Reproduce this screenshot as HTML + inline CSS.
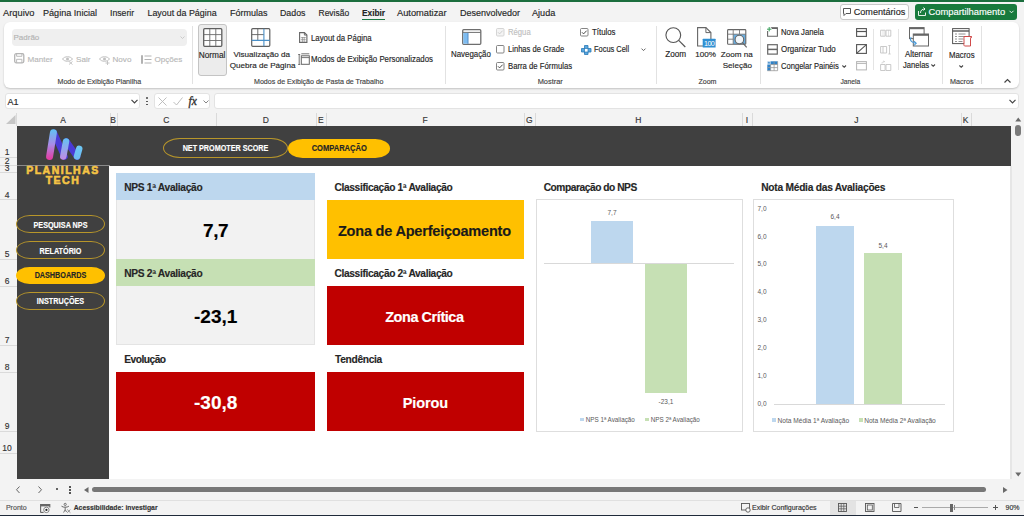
<!DOCTYPE html>
<html><head><meta charset="utf-8">
<style>
*{box-sizing:border-box;margin:0;padding:0}
html,body{width:1024px;height:516px;overflow:hidden}
body{position:relative;background:#f3f3f3;font-family:"Liberation Sans",sans-serif;color:#262626}
.a{position:absolute}
.t{position:absolute;white-space:nowrap;line-height:12px;height:12px;-webkit-text-stroke:0.15px currentColor}
.sep{position:absolute;width:1px;background:#e2e2e2}
svg{position:absolute;overflow:visible}
</style></head><body>
<!-- top green line -->
<div class="a" style="left:0;top:0;width:1024px;height:2px;background:#1b6e3e"></div>

<!-- MENU TABS -->
<div class="t" style="left:3px;top:6.5px;font-size:9.3px">Arquivo</div>
<div class="t" style="left:43px;top:6.5px;font-size:9.1px">Página Inicial</div>
<div class="t" style="left:110px;top:6.5px;font-size:8.7px">Inserir</div>
<div class="t" style="left:147.5px;top:6.5px;font-size:8.9px">Layout da Página</div>
<div class="t" style="left:230px;top:6.5px;font-size:9px">Fórmulas</div>
<div class="t" style="left:280px;top:6.5px;font-size:8.8px">Dados</div>
<div class="t" style="left:318.5px;top:6.5px;font-size:8.5px">Revisão</div>
<div class="t" style="left:362px;top:6.5px;font-size:8.3px;font-weight:bold">Exibir</div>
<div class="a" style="left:362px;top:18.8px;width:23px;height:1.4px;background:#1b7a43"></div>
<div class="t" style="left:397px;top:6.5px;font-size:9.3px">Automatizar</div>
<div class="t" style="left:460px;top:6.5px;font-size:9px">Desenvolvedor</div>
<div class="t" style="left:532px;top:6.5px;font-size:9.1px">Ajuda</div>

<!-- Comentarios / Compartilhamento -->
<div class="a" style="left:840px;top:4px;width:69px;height:15.5px;background:#fff;border:1px solid #c8c8c8;border-radius:3px"></div>
<svg style="left:843px;top:7.5px" width="8" height="8" viewBox="0 0 8 8"><path d="M0.5 0.5h7v5h-4.5l-2 2v-2h-0.5z" fill="none" stroke="#444" stroke-width="0.9"/></svg>
<div class="t" style="left:853.7px;top:5.7px;font-size:9.1px">Comentários</div>
<div class="a" style="left:915px;top:4px;width:101.5px;height:15.5px;background:#187a3d;border-radius:3px"></div>
<svg style="left:918px;top:6.5px" width="8" height="9" viewBox="0 0 8 9"><path d="M0.5 4v4.5h7v-3" fill="none" stroke="#fff" stroke-width="0.9"/><path d="M2.5 6c0-3 2-4 4.5-4M5.5 0.5l1.5 1.5l-1.5 1.5" fill="none" stroke="#fff" stroke-width="0.9"/></svg>
<div class="t" style="left:928.5px;top:5.7px;font-size:9.4px;color:#fff">Compartilhamento</div>
<svg style="left:1009px;top:9.5px" width="5" height="4" viewBox="0 0 5 4"><path d="M0.5 0.8l2 2l2-2" fill="none" stroke="#fff" stroke-width="0.9"/></svg>

<!-- RIBBON PANEL -->
<div class="a" style="left:4px;top:22px;width:1015px;height:66px;background:#fff;border-radius:6px;box-shadow:0 1px 2px rgba(0,0,0,0.2)"></div>

<!-- RIBBON CONTENT -->
<!-- group 1: Modo de Exibicao Planilha -->
<div class="a" style="left:11.5px;top:29px;width:175.5px;height:17px;background:#efefef;border-radius:4px"></div>
<div class="t" style="left:13.5px;top:31.5px;font-size:8px;color:#b4b4b4">Padrão</div>
<svg style="left:180px;top:36px" width="5" height="3" viewBox="0 0 5 3"><path d="M0.5 0.5l2 2l2-2" fill="none" stroke="#c0c0c0" stroke-width="0.8"/></svg>
<svg style="left:14.2px;top:53.2px" width="10.5" height="10.5" viewBox="0 0 10.5 10.5"><rect x="0.7" y="0.7" width="9.1" height="9.1" rx="1.5" fill="none" stroke="#b4b4b4" stroke-width="1.3"/><path d="M2.6 0.7v2.6h5.3v-2.6" fill="none" stroke="#b4b4b4" stroke-width="0.9"/><path d="M2.6 9.8v-3.5h5.3v3.5" fill="none" stroke="#b4b4b4" stroke-width="0.9"/></svg>
<div class="t" style="left:27.5px;top:54px;font-size:8.1px;color:#b8b8b8">Manter</div>
<svg style="left:62px;top:55px" width="12" height="10" viewBox="0 0 12 10"><path d="M0.5 4c2-3 8-3 10 0c-2 3-8 3-10 0z" fill="none" stroke="#c0c0c0" stroke-width="1"/><circle cx="5.5" cy="4" r="1.5" fill="#c0c0c0"/><path d="M7 6.5l3.5 3M10.5 6.5l-3.5 3" stroke="#c0c0c0" stroke-width="0.9"/></svg>
<div class="t" style="left:76px;top:54px;font-size:8.1px;color:#b8b8b8">Sair</div>
<svg style="left:99px;top:55px" width="12" height="10" viewBox="0 0 12 10"><path d="M0.5 4c2-3 8-3 10 0c-2 3-8 3-10 0z" fill="none" stroke="#c0c0c0" stroke-width="1"/><circle cx="5.5" cy="4" r="1.5" fill="#c0c0c0"/><path d="M8.5 6v4M6.5 8h4" stroke="#c0c0c0" stroke-width="0.9"/></svg>
<div class="t" style="left:112.5px;top:54px;font-size:8.1px;color:#b8b8b8">Novo</div>
<svg style="left:141px;top:54.5px" width="11" height="9" viewBox="0 0 11 9"><path d="M1 0.3v8.4" stroke="#aaa" stroke-width="1.8"/><path d="M3.5 1h7M3.5 4.5h7M3.5 8h7" stroke="#b4b4b4" stroke-width="1"/></svg>
<div class="t" style="left:154.5px;top:54px;font-size:8.1px;color:#b8b8b8">Opções</div>
<div class="t" style="left:57.5px;top:75.5px;font-size:7.1px;color:#444">Modo de Exibição Planilha</div>
<div class="sep" style="left:192px;top:25.5px;height:58px"></div>

<!-- group 2 -->
<div class="a" style="left:197.5px;top:24px;width:29.5px;height:51.5px;background:#ececec;border:1px solid #c4c4c4;border-radius:3px"></div>
<svg style="left:202.5px;top:27.5px" width="19.5" height="19" viewBox="0 0 19.5 19"><rect x="0.7" y="0.7" width="18.1" height="17.6" rx="1" fill="#fff" stroke="#5e5e5e" stroke-width="1.3"/><path d="M6.8 0.7v17.6M12.8 0.7v17.6M0.7 6.6h18.1M0.7 12.5h18.1" stroke="#6a6a6a" stroke-width="0.9"/></svg>
<div class="t" style="left:198.7px;top:48.5px;font-size:8.3px">Normal</div>
<svg style="left:251px;top:27.5px" width="19.5" height="19" viewBox="0 0 19.5 19"><rect x="0.7" y="0.7" width="18.1" height="17.6" rx="1" fill="#fff" stroke="#606060" stroke-width="1.2"/><path d="M6.8 0.7v11.8M0.7 6.6h12.2" stroke="#606060" stroke-width="0.9"/><path d="M12.9 0.7v17.6M0.7 12.4h18.1" stroke="#4a90c8" stroke-width="1.1"/></svg>
<div class="t" style="left:233.5px;top:49.1px;font-size:8.1px">Visualização da</div>
<div class="t" style="left:229.7px;top:59.6px;font-size:8.1px">Quebra de Página</div>
<svg style="left:298.8px;top:31.8px" width="8.5" height="11" viewBox="0 0 8.5 11"><path d="M0.6 0.6h4.8l2.5 2.5v7.3h-7.3z" fill="#fff" stroke="#666" stroke-width="1.1"/><path d="M5.4 0.6v2.5h2.5" fill="none" stroke="#666" stroke-width="0.9"/><path d="M1.8 5.6h5M1.8 7.7h5M3.4 5v5.2M5.2 5v5.2" stroke="#888" stroke-width="0.7"/></svg>
<div class="t" style="left:311px;top:33.3px;font-size:8.2px;transform:scaleX(0.951);transform-origin:0 50%">Layout da Página</div>
<svg style="left:297.5px;top:52.5px" width="12" height="12.5" viewBox="0 0 12 12.5"><path d="M1.2 1.5v10M0.2 1.5h2M0.2 11.5h2" stroke="#666" stroke-width="0.9"/><rect x="3.3" y="2.8" width="8" height="8.5" fill="#fff" stroke="#666" stroke-width="1"/><path d="M3.3 0.8h8M3.3 4.6h8" stroke="#666" stroke-width="0.9"/></svg>
<div class="t" style="left:311px;top:54.4px;font-size:8.2px;transform:scaleX(0.957);transform-origin:0 50%">Modos de Exibição Personalizados</div>
<div class="t" style="left:254px;top:75.5px;font-size:7.1px;color:#444">Modos de Exibição de Pasta de Trabalho</div>
<div class="sep" style="left:444.5px;top:25.5px;height:58px"></div>

<!-- group 3: Mostrar -->
<svg style="left:461.5px;top:28.8px" width="19.5" height="16" viewBox="0 0 19.5 16"><rect x="0.7" y="0.7" width="18.1" height="14.6" rx="1" fill="#fff" stroke="#6e6e6e" stroke-width="1.3"/><path d="M0.7 3.4h18.1" stroke="#6e6e6e" stroke-width="1"/><rect x="1.3" y="3.9" width="4.6" height="10.8" fill="#7ebcf0"/><path d="M6 3.9v11" stroke="#3f7fc0" stroke-width="0.9"/></svg>
<div class="t" style="left:451px;top:49.1px;font-size:8.2px;transform:scaleX(0.963);transform-origin:0 50%">Navegação</div>
<svg style="left:496.3px;top:28px" width="8.5" height="8.5" viewBox="0 0 8.5 8.5"><rect x="0.5" y="0.5" width="7.5" height="7.5" rx="1" fill="#f4f4f4" stroke="#d0d0d0" stroke-width="0.9"/><path d="M2 4.3l1.6 1.6l3-3.2" fill="none" stroke="#c8c8c8" stroke-width="0.9"/></svg>
<div class="t" style="left:507.9px;top:27.1px;font-size:8.2px;color:#c0c0c0;transform:scaleX(0.939);transform-origin:0 50%">Régua</div>
<svg style="left:496.3px;top:44.8px" width="8.5" height="8.5" viewBox="0 0 8.5 8.5"><rect x="0.5" y="0.5" width="7.5" height="7.5" rx="1" fill="#fff" stroke="#777" stroke-width="0.9"/></svg>
<div class="t" style="left:507.9px;top:44.1px;font-size:8.2px;transform:scaleX(0.927);transform-origin:0 50%">Linhas de Grade</div>
<svg style="left:496.3px;top:62px" width="8.5" height="8.5" viewBox="0 0 8.5 8.5"><rect x="0.5" y="0.5" width="7.5" height="7.5" rx="1" fill="#fff" stroke="#777" stroke-width="0.9"/><path d="M2 4.3l1.6 1.6l3-3.2" fill="none" stroke="#333" stroke-width="0.9"/></svg>
<div class="t" style="left:507.9px;top:61.1px;font-size:8.2px;transform:scaleX(0.945);transform-origin:0 50%">Barra de Fórmulas</div>
<div class="t" style="left:537.7px;top:75.7px;font-size:7.4px;color:#444">Mostrar</div>
<svg style="left:580px;top:27.8px" width="8.5" height="8.5" viewBox="0 0 8.5 8.5"><rect x="0.5" y="0.5" width="7.5" height="7.5" rx="1" fill="#fff" stroke="#777" stroke-width="0.9"/><path d="M2 4.3l1.6 1.6l3-3.2" fill="none" stroke="#333" stroke-width="0.9"/></svg>
<div class="t" style="left:591.9px;top:27.1px;font-size:8.2px;transform:scaleX(0.957);transform-origin:0 50%">Títulos</div>
<svg style="left:580.7px;top:44.5px" width="10.5" height="10" viewBox="0 0 10.5 10"><path d="M3.5 0.5h3.5v3h3v3.5h-3v2.5h-3.5v-2.5h-3v-3.5h3z" fill="#5aa7de" stroke="#2a7ab8" stroke-width="0.8"/><rect x="3.5" y="3.5" width="3.5" height="3.5" fill="#fff" stroke="#2a7ab8" stroke-width="0.7"/></svg>
<div class="t" style="left:593.6px;top:44.1px;font-size:8.2px;transform:scaleX(0.909);transform-origin:0 50%">Focus Cell</div>
<svg style="left:640.5px;top:48px" width="5" height="3.5" viewBox="0 0 5 3.5"><path d="M0.5 0.6l2 2l2-2" fill="none" stroke="#555" stroke-width="0.9"/></svg>
<div class="sep" style="left:656px;top:25.5px;height:58px"></div>

<!-- group 4: Zoom -->
<svg style="left:665px;top:26.5px" width="21" height="20.5" viewBox="0 0 21 20.5"><circle cx="8.3" cy="8.1" r="7.4" fill="none" stroke="#555" stroke-width="1.1"/><path d="M13.7 13.4l6.6 6.6" stroke="#555" stroke-width="1.2"/></svg>
<div class="t" style="left:665.2px;top:48.5px;font-size:8.2px">Zoom</div>
<svg style="left:696.5px;top:26.8px" width="19" height="21" viewBox="0 0 19 21"><path d="M0.6 0.6h8.3l5 5v13.4h-13.3z" fill="#fff" stroke="#666" stroke-width="1.1"/><path d="M8.9 0.6v5h5" fill="none" stroke="#666" stroke-width="1"/><rect x="5.7" y="11.8" width="12.9" height="8.8" rx="0.5" fill="#2f8fd2"/><text x="12.15" y="18.6" font-size="7.2" font-family="Liberation Sans" fill="#fff" text-anchor="middle" letter-spacing="-0.6">100</text></svg>
<div class="t" style="left:695.3px;top:49.1px;font-size:8.1px">100%</div>
<svg style="left:727px;top:28.8px" width="20" height="19" viewBox="0 0 20 19"><rect x="6.2" y="5.2" width="12.6" height="10" fill="#6aaee0"/><rect x="0.6" y="0.6" width="18.2" height="14.6" rx="0.8" fill="none" stroke="#666" stroke-width="1.1"/><path d="M0.6 5.2h18.2M0.6 10.2h5.6M6.2 0.6v14.6M12.5 0.6v4.6" stroke="#777" stroke-width="0.9"/><circle cx="12.4" cy="10.6" r="4.3" fill="#f2f7fb" stroke="#666" stroke-width="1.1"/><path d="M15.5 13.7l4.2 4.6" stroke="#666" stroke-width="1.2"/></svg>
<div class="t" style="left:720.7px;top:49.1px;font-size:8.1px">Zoom na</div>
<div class="t" style="left:722.7px;top:59.6px;font-size:8.1px">Seleção</div>
<div class="t" style="left:698.4px;top:75.5px;font-size:7.1px;color:#444">Zoom</div>
<div class="sep" style="left:759.5px;top:25.5px;height:58px"></div>

<!-- group 5: Janela -->
<svg style="left:767.2px;top:27.2px" width="11.5" height="10" viewBox="0 0 11.5 10"><path d="M3.8 0.7h6.6v8.6h-9.8v-5.3" fill="none" stroke="#666" stroke-width="1.1"/><path d="M5 1.3h5.4" stroke="#666" stroke-width="1.4"/><path d="M2.2 0v4.4M0 2.2h4.4" stroke="#3aa05a" stroke-width="1"/></svg>
<div class="t" style="left:780.9px;top:27.3px;font-size:8.2px;transform:scaleX(0.939);transform-origin:0 50%">Nova Janela</div>
<svg style="left:767.2px;top:43.8px" width="11" height="11" viewBox="0 0 11 11"><rect x="0.7" y="0.7" width="9.6" height="9.4" fill="#fff" stroke="#666" stroke-width="1.2"/><path d="M0.7 5.4h9.6" stroke="#666" stroke-width="1.5"/></svg>
<div class="t" style="left:780.9px;top:44.3px;font-size:8.2px;transform:scaleX(0.970);transform-origin:0 50%">Organizar Tudo</div>
<svg style="left:767.2px;top:61.2px" width="11" height="10" viewBox="0 0 11 10"><rect x="3.6" y="0.3" width="7" height="3.2" fill="#2f82c8"/><rect x="0.3" y="3.5" width="3.3" height="6.2" fill="#2f82c8"/><path d="M3.6 3.5h7M3.6 6.6h7M0.3 6.6h3.3M7.1 0.3v9.4M3.6 3.5v6.2M10.6 0.3v9.4M0.3 9.7h10.3" stroke="#999" stroke-width="0.8"/><path d="M1.9 0.2v3M0.4 1.7h3M0.8 0.6l2.2 2.2M3 0.6l-2.2 2.2" stroke="#3a86c8" stroke-width="0.6"/></svg>
<div class="t" style="left:780.9px;top:61.1px;font-size:8.2px;transform:scaleX(0.927);transform-origin:0 50%">Congelar Painéis</div>
<svg style="left:841.5px;top:65px" width="4.5" height="3" viewBox="0 0 4.5 3"><path d="M0.4 0.5l1.8 1.8l1.8-1.8" fill="none" stroke="#444" stroke-width="1.1"/></svg>
<svg style="left:856.2px;top:28px" width="11" height="9" viewBox="0 0 11 9"><rect x="0.6" y="0.6" width="9.8" height="7.8" fill="#fff" stroke="#555" stroke-width="1.1"/><path d="M0.6 3.5h9.8" stroke="#555" stroke-width="1.2"/></svg>
<svg style="left:856.2px;top:44px" width="11" height="10" viewBox="0 0 11 10"><rect x="0.6" y="0.6" width="9.8" height="8.8" fill="#fff" stroke="#555" stroke-width="1.1"/><path d="M0.6 9.4l9.8-8.8" stroke="#555" stroke-width="1.1"/></svg>
<svg style="left:856.2px;top:61px" width="11" height="9.5" viewBox="0 0 11 9.5"><rect x="0.6" y="0.6" width="9.8" height="8.3" fill="#fff" stroke="#b5b5b5" stroke-width="1"/><path d="M0.6 2.4h9.8" stroke="#b5b5b5" stroke-width="1"/></svg>
<div class="sep" style="left:873.2px;top:29px;height:41px;background:#e4e4e4"></div>
<svg style="left:880px;top:28.5px" width="11.5" height="8" viewBox="0 0 11.5 8"><path d="M0.6 1.2h4.5v6h-4.5zM6 1.2h4.8v6h-4.8z" fill="none" stroke="#c4c4c4" stroke-width="0.9"/><path d="M3 1.2v6M8.5 1.2v6" stroke="#c4c4c4" stroke-width="0.5"/></svg>
<svg style="left:880px;top:44.5px" width="11.5" height="9.5" viewBox="0 0 11.5 9.5"><path d="M0.6 1.5h6v6.5h-6zM3 1.5v6.5" fill="none" stroke="#c4c4c4" stroke-width="0.9"/><path d="M9.5 0.5v8.5M8.3 0.5h2.4M8.3 9h2.4" stroke="#c4c4c4" stroke-width="0.8"/></svg>
<svg style="left:880px;top:60.5px" width="11.5" height="10" viewBox="0 0 11.5 10"><path d="M0.6 3.5h4.5v6h-4.5zM6 3.5h4.8v6h-4.8z" fill="none" stroke="#c4c4c4" stroke-width="0.9"/><path d="M2 2.5c0-1.5 1-2 2.5-2M3.5 -0.2l1 0.8l-1 0.8" fill="none" stroke="#c4c4c4" stroke-width="0.7"/></svg>
<div class="sep" style="left:897.5px;top:29px;height:41px;background:#e4e4e4"></div>
<svg style="left:908.3px;top:27.2px" width="21.5" height="20" viewBox="0 0 21.5 20"><rect x="1.5" y="0.6" width="14.6" height="11" fill="#fff" stroke="#666" stroke-width="1"/><path d="M1.5 1.4h14.6" stroke="#666" stroke-width="1.6"/><rect x="5.3" y="7" width="15.2" height="12" fill="#fff" stroke="#666" stroke-width="1"/><path d="M5.3 7.9h15.2" stroke="#666" stroke-width="1.8"/><path d="M3.2 10c-1.6 2.2-1.2 5.2 4.6 6.3" fill="none" stroke="#4a9ad8" stroke-width="1.1"/><path d="M6 14.2l2.2 2.1l-2.2 2" fill="none" stroke="#4a9ad8" stroke-width="1.1"/></svg>
<div class="t" style="left:904.7px;top:49.1px;font-size:8.2px;transform:scaleX(0.963);transform-origin:0 50%">Alternar</div>
<div class="t" style="left:902.5px;top:59.6px;font-size:8.2px;transform:scaleX(0.927);transform-origin:0 50%">Janelas</div>
<svg style="left:930.5px;top:63.5px" width="4.5" height="3" viewBox="0 0 4.5 3"><path d="M0.4 0.5l1.8 1.8l1.8-1.8" fill="none" stroke="#444" stroke-width="1.1"/></svg>
<div class="t" style="left:840.5px;top:75.5px;font-size:6.7px;color:#444">Janela</div>
<div class="sep" style="left:942px;top:25.5px;height:58px"></div>

<!-- group 6: Macros -->
<svg style="left:951.8px;top:28px" width="21" height="19.5" viewBox="0 0 21 19.5"><rect x="0.6" y="0.6" width="16.5" height="15" fill="#fff" stroke="#555" stroke-width="1"/><path d="M0.6 3h16.5" stroke="#555" stroke-width="1.4"/><path d="M3 6h2M6.5 6h7M3 8.5h2M6.5 8.5h7M3 11h2M6.5 11h5M3 13.5h2M6.5 13.5h4" stroke="#777" stroke-width="0.8"/><path d="M12 8.5h7.5l-1 2v7.5h-5.5c-1 0-1.5-1-1-2v-5.5z" fill="#fff" stroke="#d04a4a" stroke-width="1"/><path d="M19.5 8.5c0 1-0.5 2-1 2" fill="none" stroke="#d04a4a" stroke-width="0.9"/></svg>
<div class="t" style="left:948.7px;top:50.1px;font-size:8.2px;transform:scaleX(0.951);transform-origin:0 50%">Macros</div>
<svg style="left:959px;top:64.5px" width="4.5" height="3" viewBox="0 0 4.5 3"><path d="M0.4 0.5l1.8 1.8l1.8-1.8" fill="none" stroke="#444" stroke-width="1.1"/></svg>
<div class="t" style="left:950px;top:75.5px;font-size:7.2px;color:#444">Macros</div>
<div class="sep" style="left:981px;top:25.5px;height:58px"></div>
<svg style="left:1003.5px;top:79px" width="7" height="4" viewBox="0 0 7 4"><path d="M0.5 3.5l3-3l3 3" fill="none" stroke="#444" stroke-width="1.2"/></svg>

<!-- FORMULA BAR -->
<div class="a" style="left:4.5px;top:92.9px;width:135px;height:16px;background:#fff;border:1px solid #e3e3e3;border-radius:3px"></div>
<div class="t" style="left:7.5px;top:95.5px;font-size:9px">A1</div>
<svg style="left:131px;top:99px" width="7" height="5" viewBox="0 0 7 5"><path d="M0.5 0.8l3 3l3-3" fill="none" stroke="#444" stroke-width="1.2"/></svg>
<div class="a" style="left:146px;top:97.4px;width:1.5px;height:1.5px;background:#444;border-radius:1px"></div>
<div class="a" style="left:146px;top:100.5px;width:1.5px;height:1.5px;background:#444;border-radius:1px"></div>
<div class="a" style="left:146px;top:103.6px;width:1.5px;height:1.5px;background:#444;border-radius:1px"></div>
<div class="a" style="left:154px;top:92.9px;width:56px;height:16px;background:#fff;border:1px solid #e3e3e3;border-radius:3px"></div>
<svg style="left:158px;top:97px" width="9" height="9" viewBox="0 0 9 9"><path d="M0.5 0.5l8 8M8.5 0.5l-8 8" stroke="#b8b8b8" stroke-width="0.9"/></svg>
<svg style="left:173px;top:97px" width="10" height="9" viewBox="0 0 10 9"><path d="M0.5 5l3 3l6-7.5" fill="none" stroke="#b8b8b8" stroke-width="0.9"/></svg>
<div class="t" style="left:188.5px;top:94.8px;font-size:11.5px;font-family:'Liberation Serif';font-style:italic;color:#333;-webkit-text-stroke:0.35px #333">fx</div>
<svg style="left:202.8px;top:99.5px" width="6" height="4" viewBox="0 0 6 4"><path d="M0.5 0.5l2.5 2.5l2.5-2.5" fill="none" stroke="#777" stroke-width="0.9"/></svg>
<div class="a" style="left:213.5px;top:92.9px;width:805px;height:16px;background:#fff;border:1px solid #e3e3e3;border-radius:3px"></div>
<svg style="left:1009px;top:99px" width="7" height="5" viewBox="0 0 7 5"><path d="M0.5 0.8l3 3l3-3" fill="none" stroke="#444" stroke-width="1.2"/></svg>

<!-- COLUMN HEADERS -->
<div class="a" style="left:0;top:113px;width:1011px;height:13px;background:#f3f3f3"></div>

<!-- COLUMN HEADER LABELS -->
<svg style="left:5.9px;top:115.3px" width="9.5" height="9" viewBox="0 0 9.5 9"><path d="M9.5 0v9h-9.5z" fill="#c6c6c6"/></svg>
<div class="a" style="left:16px;top:113px;width:1px;height:13px;background:#dadada"></div>
<div class="a" style="left:109.5px;top:113px;width:1px;height:13px;background:#dadada"></div>
<div class="a" style="left:116.5px;top:113px;width:1px;height:13px;background:#dadada"></div>
<div class="a" style="left:216px;top:113px;width:1px;height:13px;background:#dadada"></div>
<div class="a" style="left:315.5px;top:113px;width:1px;height:13px;background:#dadada"></div>
<div class="a" style="left:326px;top:113px;width:1px;height:13px;background:#dadada"></div>
<div class="a" style="left:524px;top:113px;width:1px;height:13px;background:#dadada"></div>
<div class="a" style="left:534.5px;top:113px;width:1px;height:13px;background:#dadada"></div>
<div class="a" style="left:742px;top:113px;width:1px;height:13px;background:#dadada"></div>
<div class="a" style="left:752px;top:113px;width:1px;height:13px;background:#dadada"></div>
<div class="a" style="left:960.5px;top:113px;width:1px;height:13px;background:#dadada"></div>
<div class="a" style="left:970.5px;top:113px;width:1px;height:13px;background:#dadada"></div>
<div class="t" style="left:16.5px;width:93px;top:114px;font-size:8.5px;text-align:center;color:#333">A</div>
<div class="t" style="left:109.5px;width:7px;top:114px;font-size:8.5px;text-align:center;color:#333">B</div>
<div class="t" style="left:116.5px;width:99.5px;top:114px;font-size:8.5px;text-align:center;color:#333">C</div>
<div class="t" style="left:216px;width:99.5px;top:114px;font-size:8.5px;text-align:center;color:#333">D</div>
<div class="t" style="left:315.5px;width:10.5px;top:114px;font-size:8.5px;text-align:center;color:#333">E</div>
<div class="t" style="left:326px;width:198px;top:114px;font-size:8.5px;text-align:center;color:#333">F</div>
<div class="t" style="left:524px;width:10.5px;top:114px;font-size:8.5px;text-align:center;color:#333">G</div>
<div class="t" style="left:534.5px;width:207.5px;top:114px;font-size:8.5px;text-align:center;color:#333">H</div>
<div class="t" style="left:742px;width:10px;top:114px;font-size:8.5px;text-align:center;color:#333">I</div>
<div class="t" style="left:752px;width:208.5px;top:114px;font-size:8.5px;text-align:center;color:#333">J</div>
<div class="t" style="left:960.5px;width:10px;top:114px;font-size:8.5px;text-align:center;color:#333">K</div>

<!-- ROW HEADERS -->
<div class="a" style="left:0;top:156.5px;width:16.5px;height:1px;background:#dadada"></div>
<div class="a" style="left:0;top:164.5px;width:16.5px;height:1px;background:#dadada"></div>
<div class="a" style="left:0;top:171.5px;width:16.5px;height:1px;background:#dadada"></div>
<div class="a" style="left:0;top:199px;width:16.5px;height:1px;background:#dadada"></div>
<div class="a" style="left:0;top:258.5px;width:16.5px;height:1px;background:#dadada"></div>
<div class="a" style="left:0;top:285.5px;width:16.5px;height:1px;background:#dadada"></div>
<div class="a" style="left:0;top:344.5px;width:16.5px;height:1px;background:#dadada"></div>
<div class="a" style="left:0;top:371.5px;width:16.5px;height:1px;background:#dadada"></div>
<div class="a" style="left:0;top:430.5px;width:16.5px;height:1px;background:#dadada"></div>
<div class="a" style="left:0;top:452.5px;width:16.5px;height:1px;background:#dadada"></div>
<div class="t" style="left:0;width:14px;top:145.5px;font-size:8.5px;text-align:center;color:#333">1</div>
<div class="t" style="left:0;width:14px;top:154.5px;font-size:8.5px;text-align:center;color:#333">2</div>
<div class="t" style="left:0;width:14px;top:162px;font-size:8.5px;text-align:center;color:#333">3</div>
<div class="t" style="left:0;width:14px;top:188.5px;font-size:8.5px;text-align:center;color:#333">4</div>
<div class="t" style="left:0;width:14px;top:247.5px;font-size:8.5px;text-align:center;color:#333">5</div>
<div class="t" style="left:0;width:14px;top:274.5px;font-size:8.5px;text-align:center;color:#333">6</div>
<div class="t" style="left:0;width:14px;top:334px;font-size:8.5px;text-align:center;color:#333">7</div>
<div class="t" style="left:0;width:14px;top:360.5px;font-size:8.5px;text-align:center;color:#333">8</div>
<div class="t" style="left:0;width:14px;top:419.5px;font-size:8.5px;text-align:center;color:#333">9</div>
<div class="t" style="left:0;width:14px;top:441.5px;font-size:8.5px;text-align:center;color:#333">10</div>

<!-- SHEET BODY -->
<div class="a" style="left:16.5px;top:126px;width:994.5px;height:353px;background:#fff"></div>
<div class="a" style="left:16.5px;top:126px;width:994.5px;height:39.8px;background:#404040"></div>
<div class="a" style="left:1010.4px;top:165.8px;width:1.3px;height:313.2px;background:#e6e6e6"></div>
<div class="a" style="left:16.5px;top:126px;width:92.8px;height:353px;background:#404040"></div>
<div class="a" style="left:16.5px;top:165px;width:93px;height:1px;background:#8a8a8a"></div>

<!-- logo -->
<svg style="left:40px;top:126px" width="48" height="38" viewBox="40 126 48 38">
<defs>
<linearGradient id="g1" gradientUnits="userSpaceOnUse" x1="0" y1="160" x2="0" y2="129"><stop offset="0" stop-color="#e8389f"/><stop offset="0.5" stop-color="#a98be6"/><stop offset="1" stop-color="#5fc3f4"/></linearGradient>
<linearGradient id="g2" gradientUnits="userSpaceOnUse" x1="0" y1="160" x2="0" y2="138"><stop offset="0" stop-color="#c58ae4"/><stop offset="1" stop-color="#62c3f4"/></linearGradient>
<linearGradient id="g3" gradientUnits="userSpaceOnUse" x1="0" y1="160" x2="0" y2="145"><stop offset="0" stop-color="#70b8f2"/><stop offset="1" stop-color="#6ccaf6"/></linearGradient>
</defs>
<path d="M54 133L64.5 156.5" stroke="#4a3bd6" stroke-width="6.5" stroke-linecap="round"/>
<path d="M66.5 141.5L77 156.5" stroke="#4a3bd6" stroke-width="6.5" stroke-linecap="round"/>
<path d="M49.6 156.5L53.4 132.8" stroke="url(#g1)" stroke-width="7" stroke-linecap="round"/>
<path d="M63.3 156.5L66 141.5" stroke="url(#g2)" stroke-width="6.5" stroke-linecap="round"/>
<path d="M77 156.5L79.2 148.8" stroke="url(#g3)" stroke-width="6.5" stroke-linecap="round"/>
</svg>
<div class="t" style="left:16.5px;width:93px;top:165px;height:10px;line-height:10px;font-size:10.5px;font-weight:bold;text-align:center;color:#f5c445;letter-spacing:1.5px;-webkit-text-stroke:0.6px #f5c445">PLANILHAS</div>
<div class="t" style="left:16.5px;width:93px;top:174.5px;height:10px;line-height:10px;font-size:10.5px;font-weight:bold;text-align:center;color:#f5c445;letter-spacing:1.5px;-webkit-text-stroke:0.6px #f5c445">TECH</div>

<!-- side buttons -->
<div class="a" style="left:16.3px;top:215.3px;width:89px;height:17.4px;border:1px solid #b8962a;border-radius:14px / 9px"></div>
<div class="t" style="left:16.3px;width:89px;top:218.5px;font-size:8.3px;font-weight:bold;text-align:center;color:#fff;transform:scaleX(0.87)">PESQUISA NPS</div>
<div class="a" style="left:16.3px;top:241.2px;width:89px;height:17.8px;border:1px solid #b8962a;border-radius:14px / 9px"></div>
<div class="t" style="left:16.3px;width:89px;top:244.5px;font-size:8.3px;font-weight:bold;text-align:center;color:#fff;transform:scaleX(0.87)">RELATÓRIO</div>
<div class="a" style="left:16.3px;top:266.7px;width:89px;height:17.4px;background:#ffc000;border-radius:14px / 8.7px"></div>
<div class="t" style="left:16.3px;width:89px;top:269.3px;font-size:8.3px;font-weight:bold;text-align:center;color:#262626;transform:scaleX(0.87)">DASHBOARDS</div>
<div class="a" style="left:16.3px;top:292px;width:89px;height:17.8px;border:1px solid #b8962a;border-radius:14px / 9px"></div>
<div class="t" style="left:16.3px;width:89px;top:294.5px;font-size:8.3px;font-weight:bold;text-align:center;color:#fff;transform:scaleX(0.87)">INSTRUÇÕES</div>

<!-- top pills -->
<div class="a" style="left:162.5px;top:138px;width:125px;height:20px;border:1px solid #b8962a;border-radius:17px / 10px"></div>
<div class="t" style="left:162.5px;width:125px;top:142.6px;font-size:8.2px;font-weight:bold;text-align:center;color:#fff;transform:scaleX(0.88)">NET PROMOTER SCORE</div>
<div class="a" style="left:287.5px;top:138.5px;width:102.5px;height:19.5px;background:#ffc000;border-radius:15px / 9.75px"></div>
<div class="t" style="left:287.5px;width:102.5px;top:142px;font-size:8.4px;font-weight:bold;text-align:center;color:#262626;transform:scaleX(0.9)">COMPARAÇÃO</div>

<!-- CARDS -->
<div class="a" style="left:116.3px;top:173px;width:198.7px;height:26.5px;background:#bdd7ee"></div>
<div class="t" style="left:124.3px;top:181.6px;font-size:10.2px;font-weight:bold;color:#262626;letter-spacing:-0.3px">NPS 1ª Avaliação</div>
<div class="a" style="left:116.3px;top:199.5px;width:198.7px;height:59.5px;background:#f2f2f2;border-left:1px solid #e4e4e4;border-right:1px solid #e4e4e4"></div>
<div class="t" style="left:116.3px;width:198.7px;top:223px;height:16px;line-height:16px;font-size:19px;font-weight:bold;text-align:center;color:#000;letter-spacing:-0.3px">7,7</div>
<div class="a" style="left:116.3px;top:259px;width:198.7px;height:26.8px;background:#c6e0b4"></div>
<div class="t" style="left:124.3px;top:267.6px;font-size:10.2px;font-weight:bold;color:#262626;letter-spacing:-0.3px">NPS 2ª Avaliação</div>
<div class="a" style="left:116.3px;top:285.8px;width:198.7px;height:59.5px;background:#f2f2f2;border:1px solid #e4e4e4;border-top:none"></div>
<div class="t" style="left:116.3px;width:198.7px;top:309px;height:16px;line-height:16px;font-size:19px;font-weight:bold;text-align:center;color:#000;letter-spacing:0px">-23,1</div>
<div class="t" style="left:124.3px;top:353.6px;font-size:10.2px;font-weight:bold;color:#262626;letter-spacing:-0.5px">Evolução</div>
<div class="a" style="left:116.3px;top:372px;width:198.7px;height:58.8px;background:#c00000"></div>
<div class="t" style="left:116.3px;width:198.7px;top:395px;height:16px;line-height:16px;font-size:19px;font-weight:bold;text-align:center;color:#fff;letter-spacing:0px">-30,8</div>

<div class="t" style="left:334.5px;top:181.6px;font-size:10.2px;font-weight:bold;color:#262626;letter-spacing:-0.35px">Classificação 1ª Avaliação</div>
<div class="a" style="left:327px;top:200px;width:196.8px;height:58.8px;background:#ffc000"></div>
<div class="t" style="left:326px;width:196.8px;top:222.5px;height:16px;line-height:16px;font-size:14.5px;font-weight:bold;text-align:center;color:#1a1a1a;letter-spacing:-0.2px">Zona de Aperfeiçoamento</div>
<div class="t" style="left:334.5px;top:267.6px;font-size:10.2px;font-weight:bold;color:#262626;letter-spacing:-0.35px">Classificação 2ª Avaliação</div>
<div class="a" style="left:327px;top:286.2px;width:196.8px;height:58.8px;background:#c00000"></div>
<div class="t" style="left:326px;width:196.8px;top:308.5px;height:16px;line-height:16px;font-size:14.5px;font-weight:bold;text-align:center;color:#fff;letter-spacing:-0.45px">Zona Crítica</div>
<div class="t" style="left:335px;top:353.6px;font-size:10.2px;font-weight:bold;color:#262626;letter-spacing:-0.3px">Tendência</div>
<div class="a" style="left:327px;top:372px;width:196.8px;height:58.8px;background:#c00000"></div>
<div class="t" style="left:327px;width:196.8px;top:394.5px;height:16px;line-height:16px;font-size:14.5px;font-weight:bold;text-align:center;color:#fff;letter-spacing:-0.1px">Piorou</div>

<!-- CHART 1 -->
<div class="t" style="left:543.7px;top:181.6px;font-size:10.2px;font-weight:bold;color:#262626;letter-spacing:-0.45px">Comparação do NPS</div>
<div class="a" style="left:535.5px;top:199.3px;width:207px;height:232.5px;background:#fff;border:1px solid #dedede"></div>
<div class="a" style="left:590.7px;top:220.8px;width:42.3px;height:43px;background:#bdd7ee"></div>
<div class="a" style="left:644.5px;top:263.8px;width:42.5px;height:129.5px;background:#c6e0b4"></div>
<div class="a" style="left:543.7px;top:263.3px;width:190px;height:1px;background:#d9d9d9"></div>
<div class="t" style="left:591px;width:42px;top:207.5px;height:10px;line-height:10px;font-size:6.5px;text-align:center;color:#5a5a5a;-webkit-text-stroke:0">7,7</div>
<div class="t" style="left:645px;width:42px;top:397.4px;height:10px;line-height:10px;font-size:6.5px;text-align:center;color:#5a5a5a;-webkit-text-stroke:0">-23,1</div>
<div class="a" style="left:580px;top:417.5px;width:3.7px;height:3.7px;background:#bdd7ee"></div>
<div class="t" style="left:585.7px;top:415px;height:10px;line-height:10px;font-size:6.3px;color:#5a5a5a;-webkit-text-stroke:0">NPS 1ª Avaliação</div>
<div class="a" style="left:645px;top:417.5px;width:3.7px;height:3.7px;background:#c6e0b4"></div>
<div class="t" style="left:650.7px;top:415px;height:10px;line-height:10px;font-size:6.3px;color:#5a5a5a;-webkit-text-stroke:0">NPS 2ª Avaliação</div>

<!-- CHART 2 -->
<div class="t" style="left:761.2px;top:181.6px;font-size:10.2px;font-weight:bold;color:#262626;letter-spacing:-0.24px">Nota Média das Avaliações</div>
<div class="a" style="left:753.3px;top:199.3px;width:200.5px;height:233.2px;background:#fff;border:1px solid #dedede"></div>
<div class="t" style="left:757.5px;top:203.5px;height:10px;line-height:10px;font-size:6.5px;color:#5a5a5a;-webkit-text-stroke:0">7,0</div>
<div class="t" style="left:757.5px;top:231.5px;height:10px;line-height:10px;font-size:6.5px;color:#5a5a5a;-webkit-text-stroke:0">6,0</div>
<div class="t" style="left:757.5px;top:259.3px;height:10px;line-height:10px;font-size:6.5px;color:#5a5a5a;-webkit-text-stroke:0">5,0</div>
<div class="t" style="left:757.5px;top:287px;height:10px;line-height:10px;font-size:6.5px;color:#5a5a5a;-webkit-text-stroke:0">4,0</div>
<div class="t" style="left:757.5px;top:315.3px;height:10px;line-height:10px;font-size:6.5px;color:#5a5a5a;-webkit-text-stroke:0">3,0</div>
<div class="t" style="left:757.5px;top:343px;height:10px;line-height:10px;font-size:6.5px;color:#5a5a5a;-webkit-text-stroke:0">2,0</div>
<div class="t" style="left:757.5px;top:371px;height:10px;line-height:10px;font-size:6.5px;color:#5a5a5a;-webkit-text-stroke:0">1,0</div>
<div class="t" style="left:757.5px;top:399.3px;height:10px;line-height:10px;font-size:6.5px;color:#5a5a5a;-webkit-text-stroke:0">0,0</div>
<div class="a" style="left:815.7px;top:225.5px;width:38.3px;height:179px;background:#bdd7ee"></div>
<div class="a" style="left:864.2px;top:253.2px;width:38.3px;height:151.3px;background:#c6e0b4"></div>
<div class="a" style="left:773.7px;top:404.3px;width:171.3px;height:1px;background:#d9d9d9"></div>
<div class="t" style="left:815px;width:40px;top:212px;height:10px;line-height:10px;font-size:6.5px;text-align:center;color:#5a5a5a;-webkit-text-stroke:0">6,4</div>
<div class="t" style="left:863px;width:40px;top:240.5px;height:10px;line-height:10px;font-size:6.5px;text-align:center;color:#5a5a5a;-webkit-text-stroke:0">5,4</div>
<div class="a" style="left:771.7px;top:418.3px;width:4px;height:4px;background:#bdd7ee"></div>
<div class="t" style="left:777.5px;top:415.8px;height:10px;line-height:10px;font-size:6.6px;color:#5a5a5a;-webkit-text-stroke:0">Nota Média 1ª Avaliação</div>
<div class="a" style="left:858.7px;top:418.3px;width:4px;height:4px;background:#c6e0b4"></div>
<div class="t" style="left:864.2px;top:415.8px;height:10px;line-height:10px;font-size:6.6px;color:#5a5a5a;-webkit-text-stroke:0">Nota Média 2ª Avaliação</div>

<!-- VERTICAL SCROLLBAR -->
<svg style="left:1014.5px;top:116.5px" width="6.5" height="5" viewBox="0 0 6.5 5"><path d="M3.25 0.5l3 4h-6z" fill="#6a6a6a"/></svg>
<div class="a" style="left:1015.2px;top:124.8px;width:5.6px;height:11.2px;background:#7a7a7a;border-radius:3px"></div>
<svg style="left:1014.5px;top:471.5px" width="6.5" height="5" viewBox="0 0 6.5 5"><path d="M3.25 4.5l3-4h-6z" fill="#6a6a6a"/></svg>

<!-- HORIZONTAL SCROLL ROW -->
<svg style="left:15.5px;top:485.5px" width="4" height="7.5" viewBox="0 0 4 7.5"><path d="M3.5 0.5l-3 3.25l3 3.25" fill="none" stroke="#555" stroke-width="0.9"/></svg>
<svg style="left:37.5px;top:485.5px" width="4" height="7.5" viewBox="0 0 4 7.5"><path d="M0.5 0.5l3 3.25l-3 3.25" fill="none" stroke="#555" stroke-width="0.9"/></svg>
<div class="a" style="left:56.3px;top:488.3px;width:2px;height:2px;background:#333;border-radius:1px"></div>
<div class="a" style="left:69.3px;top:486px;width:1.5px;height:1.5px;background:#555"></div>
<div class="a" style="left:69.3px;top:489px;width:1.5px;height:1.5px;background:#555"></div>
<div class="a" style="left:69.3px;top:492px;width:1.5px;height:1.5px;background:#555"></div>
<svg style="left:84px;top:486.5px" width="5" height="6" viewBox="0 0 5 6"><path d="M0 3l4.5-3v6z" fill="#6a6a6a"/></svg>
<div class="a" style="left:92px;top:486.7px;width:894px;height:5.4px;background:#777;border-radius:3px"></div>
<svg style="left:1003px;top:486.5px" width="5" height="6" viewBox="0 0 5 6"><path d="M4.5 3l-4.5-3v6z" fill="#6a6a6a"/></svg>

<!-- STATUS BAR CONTENT -->
<div class="t" style="left:5.9px;top:502.3px;font-size:7.1px;color:#555">Pronto</div>
<svg style="left:40px;top:503.8px" width="10.5" height="9" viewBox="0 0 10.5 9"><path d="M0.6 8.4v-7.8h9.2v3" fill="none" stroke="#666" stroke-width="1.1"/><path d="M0.6 1.5h9.2" stroke="#666" stroke-width="1.8"/><path d="M0.6 8.4h3" stroke="#666" stroke-width="1.1"/><circle cx="6.4" cy="5.9" r="2.7" fill="#fff" stroke="#777" stroke-width="0.9"/><circle cx="6.4" cy="5.9" r="1.1" fill="#222"/></svg>
<svg style="left:61px;top:503px" width="10" height="10" viewBox="0 0 10 10"><circle cx="4.2" cy="1.4" r="1.1" fill="none" stroke="#666" stroke-width="0.9"/><path d="M0.5 3.2c1 0.8 2.3 1 3.7 1s2.7-0.2 3.7-1" fill="none" stroke="#666" stroke-width="1"/><path d="M4.2 4.2v2.5l-1.6 2.8M4.2 6.7l1.4 2.3" fill="none" stroke="#666" stroke-width="0.9"/><path d="M6.2 6.5l3.2 3.2M9.4 6.5l-3.2 3.2" stroke="#777" stroke-width="0.8"/></svg>
<div class="t" style="left:73.7px;top:502.3px;font-size:6.8px;font-weight:bold;color:#333">Acessibilidade: investigar</div>
<svg style="left:741.4px;top:503px" width="10" height="9.5" viewBox="0 0 10 9.5"><rect x="0.5" y="0.5" width="8" height="6.5" fill="none" stroke="#555" stroke-width="0.9"/><circle cx="7" cy="7" r="2.2" fill="#fff" stroke="#555" stroke-width="0.9"/></svg>
<div class="t" style="left:752px;top:502.3px;font-size:7px;color:#333">Exibir Configurações</div>
<div class="a" style="left:829.8px;top:500.5px;width:26px;height:14px;background:#e3e3e3"></div>
<svg style="left:838px;top:503px" width="9" height="9" viewBox="0 0 9 9"><rect x="0.5" y="0.5" width="8" height="8" fill="none" stroke="#555" stroke-width="0.9"/><path d="M3.2 0.5v8M5.8 0.5v8M0.5 3.2h8M0.5 5.8h8" stroke="#555" stroke-width="0.7"/></svg>
<svg style="left:864.8px;top:503px" width="9.5" height="9" viewBox="0 0 9.5 9"><rect x="0.5" y="0.5" width="8.5" height="8" fill="none" stroke="#555" stroke-width="0.9"/><rect x="2.3" y="2" width="5" height="5" fill="none" stroke="#555" stroke-width="0.8"/></svg>
<svg style="left:891.5px;top:503px" width="9.5" height="9" viewBox="0 0 9.5 9"><path d="M0.5 0.5h8.5v8h-8.5z" fill="none" stroke="#555" stroke-width="0.9"/><path d="M2.5 0.5v4h4.5v-4" fill="none" stroke="#555" stroke-width="0.8"/></svg>
<div class="a" style="left:914.4px;top:507.3px;width:4px;height:1px;background:#555"></div>
<div class="a" style="left:921.8px;top:507.3px;width:66.7px;height:1px;background:#aaa"></div>
<div class="a" style="left:950px;top:503.5px;width:3px;height:8px;background:#666"></div>
<div class="a" style="left:954.4px;top:505px;width:1px;height:5px;background:#888"></div>
<div class="a" style="left:992.5px;top:507.3px;width:5px;height:1px;background:#555"></div>
<div class="a" style="left:994.5px;top:505.3px;width:1px;height:5px;background:#555"></div>
<div class="t" style="left:1005.5px;top:502.3px;font-size:7px;color:#333">90%</div>

<!-- STATUS -->
<div class="a" style="left:0;top:500px;width:1024px;height:1px;background:#e0e0e0"></div>
<div class="a" style="left:0;top:514.5px;width:1024px;height:2px;background:#1f2a3a"></div>

</body></html>
